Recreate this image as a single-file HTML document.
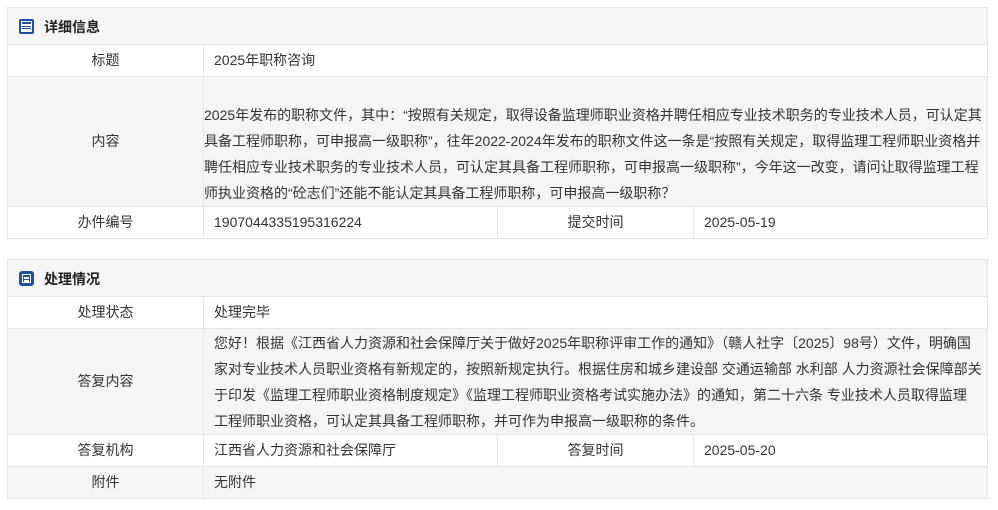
<!DOCTYPE html>
<html><head><meta charset="utf-8"><style>
*{margin:0;padding:0;box-sizing:border-box}
body{width:998px;height:510px;background:#fff;position:relative;font-family:"Liberation Sans","Noto Sans CJK SC",sans-serif;font-size:14px;color:#333;overflow:hidden}
.c{position:absolute;border:1px solid #e6e6e6;line-height:30px;white-space:nowrap;overflow:hidden}
.g{background:#f5f5f5}
.lab{text-align:center}
.val{padding-left:10px}
.hd{position:absolute;left:7px;width:981px;background:#f5f5f5;border:1px solid #e6e6e6;font-weight:bold;font-size:14px;color:#222}
.ic{position:absolute;left:11px;width:15px;height:15px;background:#1e4fa0;border-radius:2px}
.ic i{position:absolute;left:3px;width:9px;height:1.5px;background:#fff}
.ic b{position:absolute;left:2px;top:2px;width:11px;height:11px;border:1px solid #fff}
.txt{line-height:26px}
</style></head><body>
<div class="hd" style="top:7px;height:38px"><div class="ic" style="top:11px"><b></b><i style="top:5px"></i><i style="top:7.5px"></i><i style="top:10px"></i></div><span style="position:absolute;left:36px;top:9px">详细信息</span></div>
<div class="c lab" style="left:7px;top:44px;width:197px;height:33px">标题</div>
<div class="c val" style="left:203px;top:44px;width:785px;height:33px">2025年职称咨询</div>
<div class="c lab g" style="left:7px;top:76px;width:197px;height:131px;line-height:129px">内容</div>
<div class="c g txt" style="left:203px;top:76px;width:785px;height:131px;padding-top:25px">2025年发布的职称文件，其中：“按照有关规定，取得设备监理师职业资格并聘任相应专业技术职务的专业技术人员，可认定其<br>具备工程师职称，可申报高一级职称”，往年2022-2024年发布的职称文件这一条是“按照有关规定，取得监理工程师职业资格并<br>聘任相应专业技术职务的专业技术人员，可认定其具备工程师职称，可申报高一级职称”，今年这一改变，请问让取得监理工程<br>师执业资格的“砼志们”还能不能认定其具备工程师职称，可申报高一级职称？</div>
<div class="c lab" style="left:7px;top:206px;width:197px;height:33px">办件编号</div>
<div class="c val" style="left:203px;top:206px;width:295px;height:33px">1907044335195316224</div>
<div class="c lab" style="left:497px;top:206px;width:197px;height:33px">提交时间</div>
<div class="c val" style="left:693px;top:206px;width:295px;height:33px">2025-05-19</div>

<div class="hd" style="top:259px;height:38px"><div class="ic" style="top:11px;border-radius:3px"><b style="width:9px;height:9px;left:3px;top:3px"></b><i style="top:6px;left:5px;width:5px"></i><i style="top:9px;left:5px;width:5px"></i></div><span style="position:absolute;left:36px;top:9px">处理情况</span></div>
<div class="c lab" style="left:7px;top:296px;width:197px;height:33px">处理状态</div>
<div class="c val" style="left:203px;top:296px;width:785px;height:33px">处理完毕</div>
<div class="c lab g" style="left:7px;top:328px;width:197px;height:107px;line-height:105px">答复内容</div>
<div class="c g txt val" style="left:203px;top:328px;width:785px;height:107px;padding-top:1px">您好！根据《江西省人力资源和社会保障厅关于做好2025年职称评审工作的通知》（赣人社字〔2025〕98号）文件，明确国<br>家对专业技术人员职业资格有新规定的，按照新规定执行。根据住房和城乡建设部 交通运输部 水利部 人力资源社会保障部关<br>于印发《监理工程师职业资格制度规定》《监理工程师职业资格考试实施办法》的通知，第二十六条 专业技术人员取得监理<br>工程师职业资格，可认定其具备工程师职称，并可作为申报高一级职称的条件。</div>
<div class="c lab" style="left:7px;top:434px;width:197px;height:33px">答复机构</div>
<div class="c val" style="left:203px;top:434px;width:295px;height:33px">江西省人力资源和社会保障厅</div>
<div class="c lab" style="left:497px;top:434px;width:197px;height:33px">答复时间</div>
<div class="c val" style="left:693px;top:434px;width:295px;height:33px">2025-05-20</div>
<div class="c lab g" style="left:7px;top:466px;width:197px;height:33px">附件</div>
<div class="c val g" style="left:203px;top:466px;width:785px;height:33px">无附件</div>
</body></html>
